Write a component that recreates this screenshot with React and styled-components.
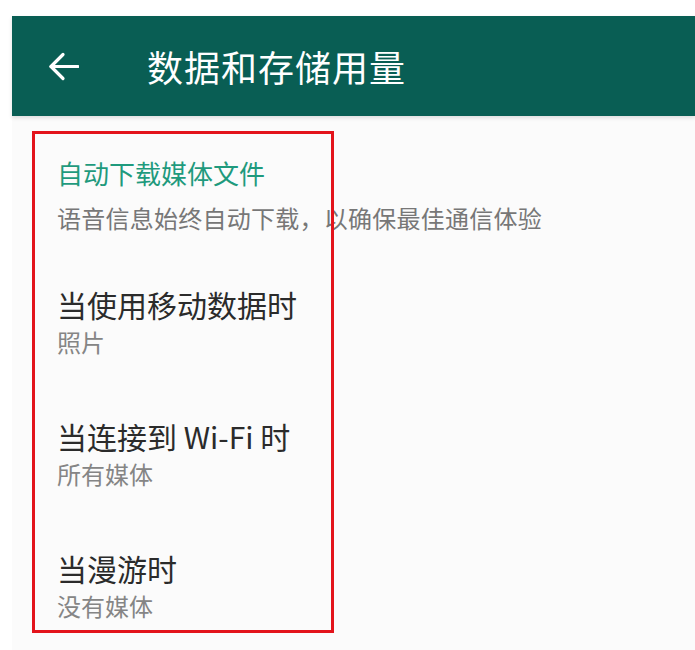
import styled, { createGlobalStyle } from 'styled-components';

const GlobalStyle = createGlobalStyle`
    html, body {
        margin: 0;
        background: #ffffff;
        font-family: "Noto Sans CJK SC", "Noto Sans", sans-serif;
    }
`;

const headerColor = '#095e54';
const accentColor = '#1f9a7d';

const settings = [
    { id: 1, title: '当使用移动数据时', value: '照片' },
    { id: 2, title: '当连接到 Wi-Fi 时', value: '所有媒体' },
    { id: 3, title: '当漫游时', value: '没有媒体' },
];

const Page = styled.div`
    position: relative;
    width: 695px;
    height: 650px;
    padding: 16px 0 0 12px;
    box-sizing: border-box;
    overflow: hidden;
`;

const Toolbar = styled.header`
    display: flex;
    align-items: center;
    height: 100px;
    background-color: ${headerColor};
    box-shadow: 0 2px 4px rgba(0, 0, 0, 0.12);
    position: relative;
    z-index: 1;
`;

const BackButton = styled.div`
    display: flex;
    align-items: center;
    margin: 0 68px 0 36px;
    width: 31px;
`;

const Title = styled.h1`
    margin: 0;
    color: #ffffff;
    font-size: 36px;
    font-weight: 400;
    line-height: 1;
    letter-spacing: 1px;
`;

const Body = styled.main`
    background: #fbfbfb;
    height: 534px;
    padding: 40px 0 0 45px;
    box-sizing: border-box;
`;

const SectionTitle = styled.h2`
    margin: 0;
    color: ${accentColor};
    font-size: 26px;
    font-weight: 400;
    line-height: 34px;
`;

const SectionNote = styled.p`
    margin: 12px 0 0;
    color: #777777;
    font-size: 24px;
    line-height: 32px;
    letter-spacing: 0.25px;
`;

const SettingList = styled.div`
    display: flex;
    flex-direction: column;
    gap: 60px;
    margin-top: 52px;
`;

const SettingRow = styled.div`
    display: flex;
    flex-direction: column;
    gap: 4px;
`;

const SettingTitle = styled.div`
    color: #2b2b2b;
    font-size: 30px;
    line-height: 36px;
`;

const SettingValue = styled.div`
    color: #858585;
    font-size: 24px;
    line-height: 32px;
`;

const Highlight = styled.div`
    position: absolute;
    left: 32px;
    top: 131px;
    width: 302px;
    height: 502px;
    border: 3px solid #e3131b;
    box-sizing: border-box;
    pointer-events: none;
`;

const BackArrow = () => (
    <svg width="31" height="29" viewBox="0 0 31 29" fill="none">
        <path d="M30 14.5H3" stroke="#fff" strokeWidth="3.2" strokeLinecap="round" />
        <path d="M15 2.5L3 14.5l12 12" stroke="#fff" strokeWidth="3.2" strokeLinecap="round" strokeLinejoin="round" />
    </svg>
);

export default function App() {
    return (
        <Page>
            <GlobalStyle />
            <Toolbar>
                <BackButton>
                    <BackArrow />
                </BackButton>
                <Title>数据和存储用量</Title>
            </Toolbar>
            <Body>
                <SectionTitle>自动下载媒体文件</SectionTitle>
                <SectionNote>语音信息始终自动下载，以确保最佳通信体验</SectionNote>
                <SettingList>
                    {settings.map((item) =>
                        <SettingRow key={item.id}>
                            <SettingTitle>{item.title}</SettingTitle>
                            <SettingValue>{item.value}</SettingValue>
                        </SettingRow>
                    )}
                </SettingList>
            </Body>
            <Highlight />
        </Page>
    );
}
